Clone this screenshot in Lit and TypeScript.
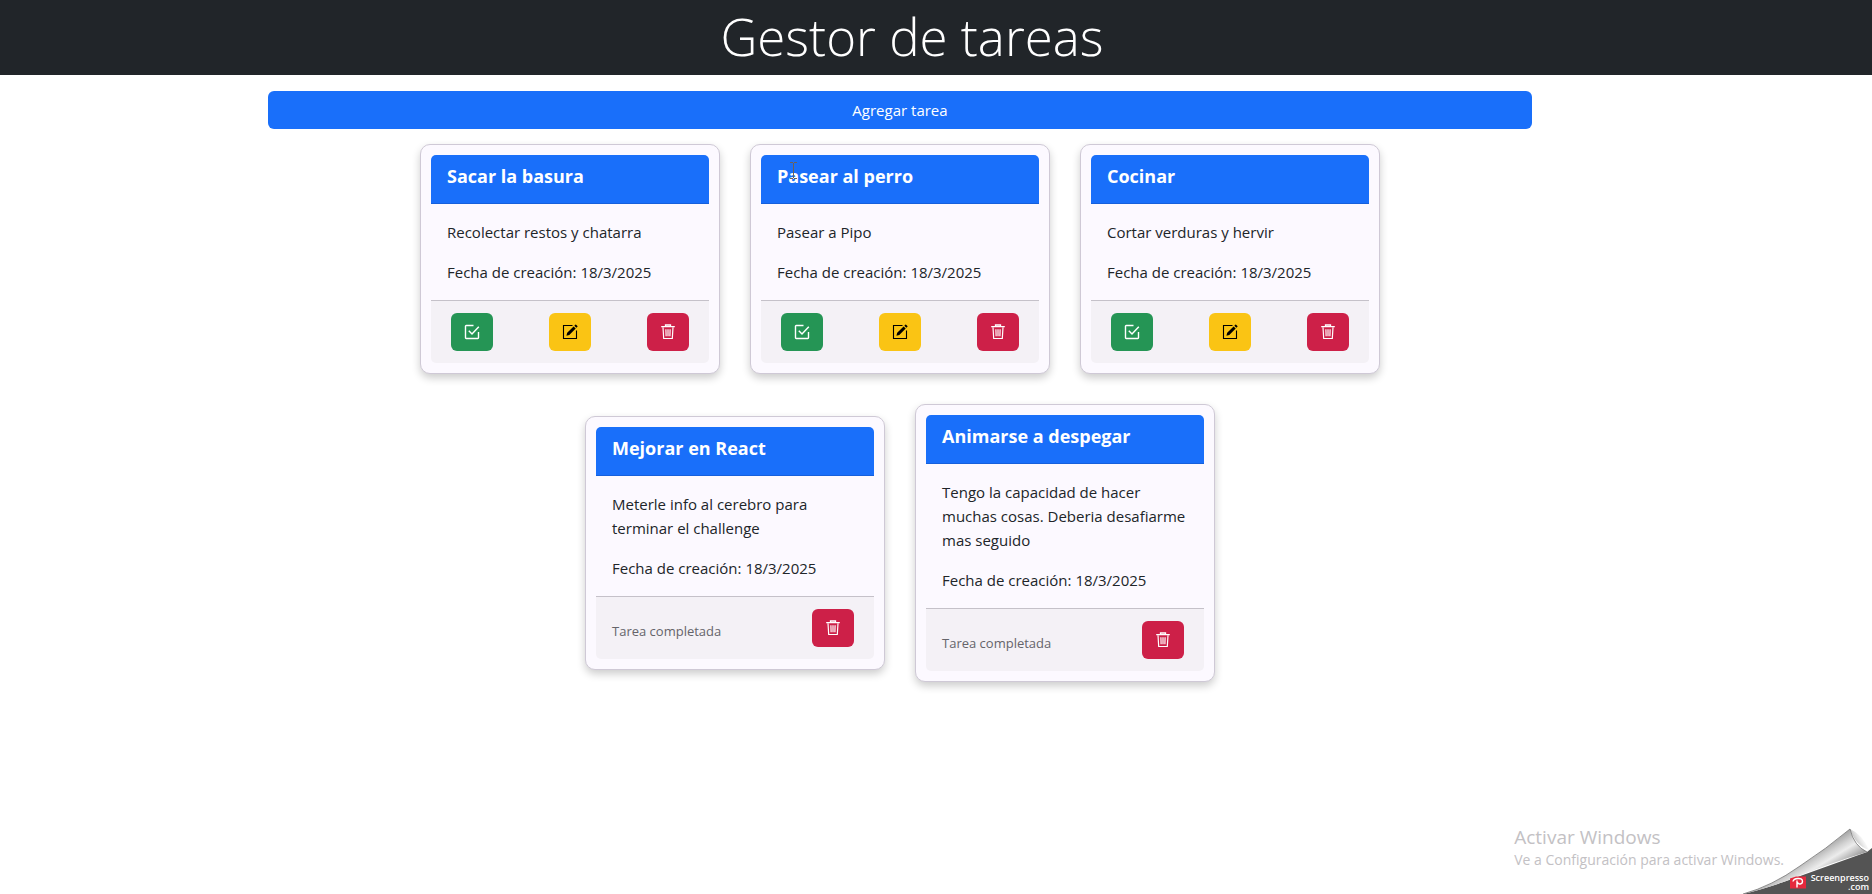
import { LitElement, html, svg, css } from "lit";
import { customElement, property } from "lit/decorators.js";

interface Task {
  title: string;
  description: string;
  date: string;
  done: boolean;
}

const TASKS: Task[] = [
  { title: "Sacar la basura", description: "Recolectar restos y chatarra", date: "18/3/2025", done: false },
  { title: "Pasear al perro", description: "Pasear a Pipo", date: "18/3/2025", done: false },
  { title: "Cocinar", description: "Cortar verduras y hervir", date: "18/3/2025", done: false },
  { title: "Mejorar en React", description: "Meterle info al cerebro para terminar el challenge", date: "18/3/2025", done: true },
  { title: "Animarse a despegar", description: "Tengo la capacidad de hacer muchas cosas. Deberia desafiarme mas seguido", date: "18/3/2025", done: true },
];

const checkIcon = svg`
  <path d="M9.500 1.500H2.200a.7.7 0 0 0-.7.7v11.600a.7.7 0 0 0 .7.7h11.600a.7.7 0 0 0 .7-.7V8" fill="none" stroke="currentColor" stroke-width="1.400"/>
  <path d="M4.800 6.800 8 10l6.800-7.200" fill="none" stroke="currentColor" stroke-width="1.500"/>`;
const editIcon = svg`
  <path d="M10.500 1.500h-9v13h13V6.500" fill="none" stroke="currentColor" stroke-width="1.100"/>
  <path d="M4.400 11.800l.8-3L11.600 2.400l2.100 2.100-6.400 6.400zM12.300 1.700l1-1a.6.6 0 0 1 .8 0l1.300 1.300a.6.6 0 0 1 0 .8l-1 1z" fill="currentColor"/>`;
const trashIcon = svg`
  <path d="M1.200 2.700h13.600M5.500 2.500V1h5v1.500" fill="none" stroke="currentColor" stroke-width="1.300"/>
  <path d="M3 3.200l.7 11.300h8.600L13 3.200M5.900 5.300l.2 7M8 5.300v7M10.100 5.300l-.2 7" fill="none" stroke="currentColor" stroke-width="1.200"/>`;

@customElement("task-card")
export class TaskCard extends LitElement {
  @property({ attribute: false }) task!: Task;

  static styles = css`
    :host { display: block; width: 300px; max-width: 100%; box-sizing: border-box; }
    .card {
      box-sizing: border-box;
      padding: 10px;
      border: 1px solid #cfc9d6;
      border-radius: 10px;
      background: #fcf9ff;
      box-shadow: 0 4px 8px rgba(0, 0, 0, 0.2);
    }
    .head {
      padding: 9px 16px 15px;
      border-bottom: 1px solid #1660dc;
      border-radius: 5px 5px 0 0;
      background: #196ffa;
    }
    .title { margin: 0; font-size: 18px; line-height: 24px; font-weight: 700; color: #fff; }
    .body { display: flex; flex-direction: column; gap: 16px; padding: 16px; }
    .text { margin: 0; }
    .foot {
      display: flex;
      align-items: center;
      justify-content: space-between;
      padding: 12px 20px;
      border-top: 1px solid #c5c1c9;
      border-radius: 0 0 5px 5px;
      background: #f4f1f6;
    }
    .foot.done { padding-left: 16px; }
    .status { padding-top: 6px; font-size: 13px; line-height: 20px; color: #65646a; }
    .btn {
      display: flex;
      align-items: center;
      justify-content: center;
      width: 42px;
      height: 38px;
      padding: 0;
      border: 0;
      border-radius: 6px;
      color: #fff;
      cursor: pointer;
    }
    .btn svg { width: 16px; height: 16px; }
    .complete { background: #259555; }
    .edit { background: #fac414; color: #000; }
    .remove { background: #cd2048; }
  `;

  render() {
    const t = this.task;
    const button = (kind: string, label: string, icon: unknown) => html`
      <button class="btn ${kind}" type="button" aria-label=${label}>
        <svg viewBox="0 0 16 16" aria-hidden="true">${icon}</svg>
      </button>`;
    return html`
      <article class="card">
        <div class="head"><h2 class="title">${t.title}</h2></div>
        <div class="body">
          <p class="text">${t.description}</p>
          <p class="text">Fecha de creación: ${t.date}</p>
        </div>
        <div class="foot ${t.done ? "done" : ""}">
          ${t.done
            ? html`<span class="status">Tarea completada</span>`
            : html`${button("complete", "Completar", checkIcon)}${button("edit", "Editar", editIcon)}`}
          ${button("remove", "Eliminar", trashIcon)}
        </div>
      </article>`;
  }
}

@customElement("app-root")
export class AppRoot extends LitElement {
  static styles = css`
    :host {
      display: block;
      position: relative;
      min-height: 100vh;
      background: #fff;
      color: #212529;
      font-family: "Segoe UI", "Open Sans", "Noto Sans", sans-serif;
      font-size: 15px;
      line-height: 24px;
    }
    .top { padding: 3px 48px 5px 0; background: #212529; }
    .heading {
      margin: 0;
      font-size: 51px;
      line-height: 67px;
      font-weight: 300;
      text-align: center;
      color: #fff;
    }
    .page { padding: 16px 72px 16px 0; }
    .inner { display: flex; flex-direction: column; gap: 15px; max-width: 1264px; margin: 0 auto; }
    .add {
      height: 38px;
      padding: 0 12px;
      border: 0;
      border-radius: 6px;
      background: #196ffa;
      color: #fff;
      font: inherit;
      cursor: pointer;
    }
    .cards { display: flex; flex-wrap: wrap; align-items: center; justify-content: center; gap: 30px; }
    .notice { position: absolute; right: 88px; bottom: 24px; color: #c3c1c4; }
    .notice-title { margin: 0; font-size: 19px; line-height: 25px; }
    .notice-text { margin: 0; font-size: 14px; line-height: 20px; }
    .curl { position: absolute; right: 0; bottom: 0; width: 132px; height: 74px; }
    .curl-art { display: block; width: 132px; height: 74px; }
    .curl-text {
      position: absolute;
      right: 3px;
      bottom: 3px;
      display: flex;
      flex-direction: column;
      align-items: flex-end;
      font-size: 9px;
      line-height: 9px;
      font-weight: 600;
      color: #fff;
    }
    .pointer { position: absolute; left: 790px; top: 162px; width: 7px; height: 17px; pointer-events: none; }
  `;

  render() {
    return html`
      <header class="top"><h1 class="heading">Gestor de tareas</h1></header>
      <main class="page">
        <div class="inner">
          <button class="add" type="button">Agregar tarea</button>
          <section class="cards">
            ${TASKS.map((t) => html`<task-card .task=${t}></task-card>`)}
          </section>
        </div>
      </main>
      <svg class="pointer" viewBox="0 0 7 17" aria-hidden="true">
        <path d="M0 .5h3M4 .5h3M3.500 1v15M0 16.500h3M4 16.500h3" fill="none" stroke="#6b6259"/>
      </svg>
      <aside class="notice">
        <p class="notice-title">Activar Windows</p>
        <p class="notice-text">Ve a Configuración para activar Windows.</p>
      </aside>
      <div class="curl">
        <svg class="curl-art" viewBox="0 0 132 74" aria-hidden="true">
          <defs>
            <linearGradient id="fold" x1="82" y1="26" x2="98" y2="52" gradientUnits="userSpaceOnUse">
              <stop offset="0" stop-color="#a2a2a2"/>
              <stop offset=".3" stop-color="#d2d2d2"/>
              <stop offset=".5" stop-color="#ececec"/>
              <stop offset="1" stop-color="#8a8a8a"/>
            </linearGradient>
            <linearGradient id="shade" x1="112" y1="24" x2="126" y2="16" gradientUnits="userSpaceOnUse">
              <stop offset="0" stop-color="#8a8a8a"/>
              <stop offset="1" stop-color="#fff" stop-opacity="0"/>
            </linearGradient>
          </defs>
          <path d="M110 9Q122 14 129 30Q116 26 110 9Z" fill="url(#shade)"/>
          <path d="M3 74Q24 69 49 60L127 32L132 28V74Z" fill="#545454"/>
          <path d="M3 74Q32 66 60 46Q86 29 110 9Q114 26 127 32Q90 43 49 60Q24 69 3 74Z" fill="url(#fold)"/>
          <path d="M3 74Q32 66 60 46Q86 29 110 9Q114 26 127 32" fill="none" stroke="#777" stroke-width=".8"/>
          <path d="M50 58.500l6-2h10v12H50z" fill="#e5283c"/>
          <path d="M57 67.500v-7M53 61.500c.5-3.500 9.500-4.500 9.500-.3 0 3.300-4.500 3.800-5 1" fill="none" stroke="#fff" stroke-width="1.400"/>
        </svg>
        <div class="curl-text"><span>Screenpresso</span><span>.com</span></div>
      </div>`;
  }
}
